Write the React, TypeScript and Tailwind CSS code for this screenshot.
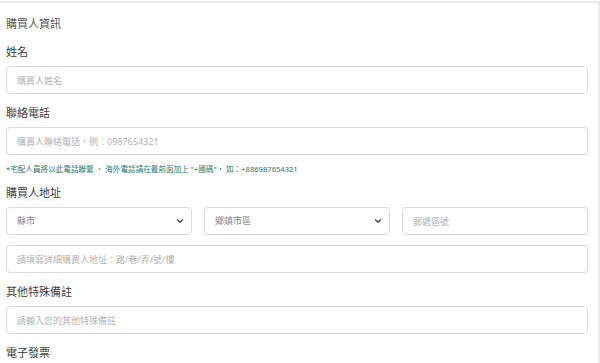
import { ChevronDown } from "lucide-react";

const inputCls =
  "block w-full h-[28px] border border-[#dcdcdc] rounded-[4px] pl-[10px] text-[9px] text-[#555] placeholder:text-[#b3b3b3] outline-none bg-white";

function Label({ children }: { children: string }) {
  return <div className="text-[11px] leading-[17px] h-[17px] text-[#3c3c3c] mb-[6px]">{children}</div>;
}

function FakeSelect({ text }: { text: string }) {
  return (
    <div className="relative h-[28px] border border-[#dcdcdc] rounded-[4px] pl-[10px] flex items-center text-[9px] text-[#888]">
      {text}
      <ChevronDown className="absolute right-[6px] top-1/2 -translate-y-1/2 text-[#444]" size={10} strokeWidth={3} />
    </div>
  );
}

export default function App() {
  return (
    <div className="w-[600px] h-[363px] overflow-hidden bg-white pt-px font-['Noto_Sans','Noto_Sans_CJK_TC',sans-serif]">
      <div className="h-full border-t-2 border-r-2 border-[#ececec] pl-[6px] pr-[10px] pt-[12px]">
        {/* buyer info */}
        <div className="text-[11px] leading-[17px] h-[17px] text-[#555] mb-[11px]">購買人資訊</div>

        <Label>姓名</Label>
        <input className={inputCls} placeholder="購買人姓名" />

        <div className="mt-[10px]">
          <Label>聯絡電話</Label>
          <input className={inputCls} placeholder="購買人聯絡電話，例：0987654321" />
          <div className="mt-[8px] text-[7.6px] leading-[12px] text-[#2a7a74] whitespace-nowrap">
            *宅配人員將以此電話聯繫 ， 海外電話請在最前面加上 "+國碼"， 如：+886987654321
          </div>
        </div>

        <div className="mt-[9px]">
          <Label>購買人地址</Label>
          <div className="grid grid-cols-3 gap-3">
            <FakeSelect text="縣市" />
            <FakeSelect text="鄉鎮市區" />
            <input className={inputCls} placeholder="郵遞區號" />
          </div>
          <input className={inputCls + " mt-[10px]"} placeholder="請填寫詳細購買人地址：路/巷/弄/號/樓" />
        </div>

        <div className="mt-[10px]">
          <Label>其他特殊備註</Label>
          <input className={inputCls} placeholder="請輸入您的其他特殊備註" />
        </div>

        <div className="mt-[10px]">
          <Label>電子發票</Label>
        </div>
      </div>
    </div>
  );
}
